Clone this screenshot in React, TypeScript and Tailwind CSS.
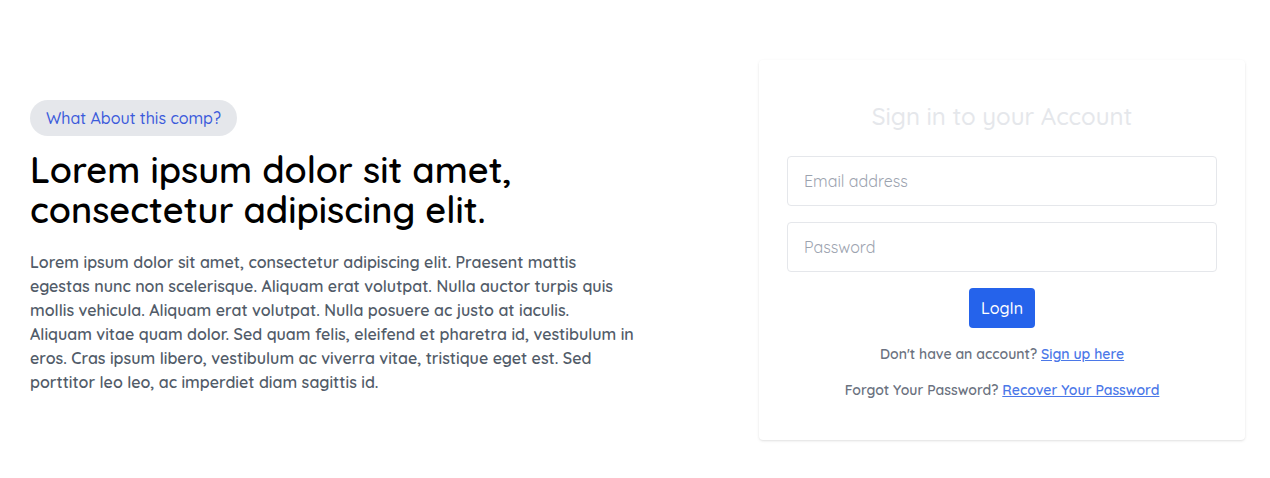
import { Fragment } from "react";

const headline = ["Lorem ipsum dolor sit amet,", "consectetur adipiscing elit."];

const description = [
  "Lorem ipsum dolor sit amet, consectetur adipiscing elit. Praesent mattis",
  "egestas nunc non scelerisque. Aliquam erat volutpat. Nulla auctor turpis quis",
  "mollis vehicula. Aliquam erat volutpat. Nulla posuere ac justo at iaculis.",
  "Aliquam vitae quam dolor. Sed quam felis, eleifend et pharetra id, vestibulum in",
  "eros. Cras ipsum libero, vestibulum ac viverra vitae, tristique eget est. Sed",
  "porttitor leo leo, ac imperdiet diam sagittis id.",
];

// Fixed line breaks on wide screens, natural wrapping on narrow ones.
function Lines({ lines }: { lines: string[] }) {
  return (
    <>
      {lines.map((line, i) => (
        <Fragment key={line}>
          {i > 0 && <br className="hidden lg:inline" />}
          {i > 0 ? " " + line : line}
        </Fragment>
      ))}
    </>
  );
}

function Field({ type, label }: { type: string; label: string }) {
  return (
    <input
      aria-label={label}
      type={type}
      placeholder={label}
      className="mb-4 h-[50px] w-full rounded border border-[#e5e7eb] px-4 text-base placeholder:text-[#9ca3af]"
    />
  );
}

function Hint({ text, link }: { text: string; link: string }) {
  return (
    <p className="mt-4 text-sm font-semibold text-[#6b7280]">
      {text}{" "}
      <a href="#" className="text-[#4b78e8] underline">
        {link}
      </a>
    </p>
  );
}

export default function App() {
  return (
    <main className="flex flex-col items-center justify-between gap-8 bg-white py-[60px] pl-[30px] pr-[25px] font-['Quicksand','Lato','Liberation_Sans',sans-serif] lg:flex-row">
      <section className="mb-1.5 w-full max-w-[610px]">
        <span className="inline-block rounded-full bg-[#e5e7eb] px-4 py-1.5 text-base font-medium text-[#3b5bdb]">
          What About this comp?
        </span>
        <h1 className="mt-3.5 text-4xl font-semibold leading-10 text-black">
          <Lines lines={headline} />
        </h1>
        <p className="mt-5 text-base font-semibold text-[#525c69]">
          <Lines lines={description} />
        </p>
      </section>
      <form className="flex w-full max-w-[486px] flex-col items-center rounded px-7 py-10 shadow">
        <h2 className="mb-6 text-2xl font-medium text-[#e5e7eb]">Sign in to your Account</h2>
        <Field type="email" label="Email address" />
        <Field type="password" label="Password" />
        <button type="button" className="h-10 rounded bg-[#2563eb] px-3 font-medium text-white">
          LogIn
        </button>
        <Hint text="Don't have an account?" link="Sign up here" />
        <Hint text="Forgot Your Password?" link="Recover Your Password" />
      </form>
    </main>
  );
}
